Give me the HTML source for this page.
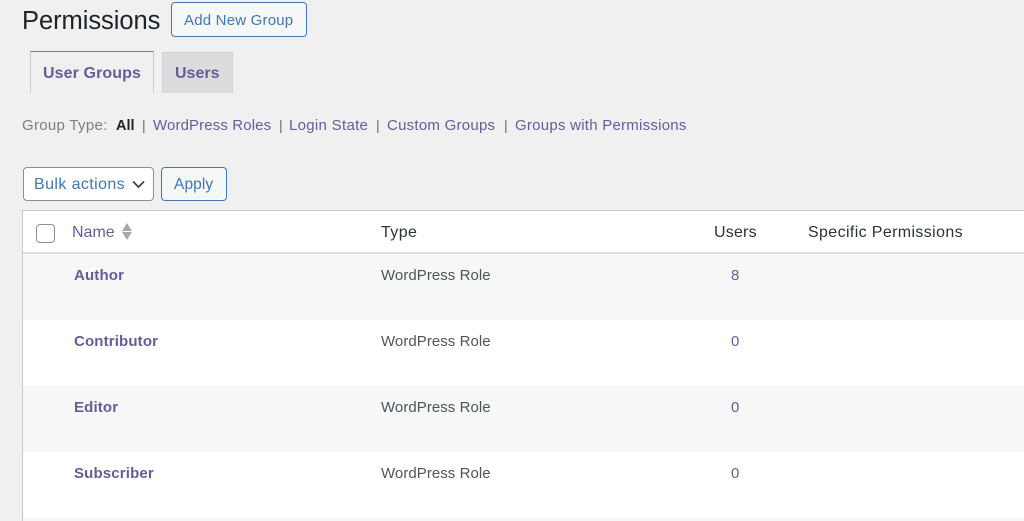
<!DOCTYPE html>
<html><head><meta charset="utf-8"><style>
html,body{margin:0;padding:0;width:1024px;height:521px;overflow:hidden}
#w{position:relative;width:1024px;height:521px;overflow:hidden;background:#f0f0f1;font-family:"Liberation Sans",sans-serif;font-size:15px;letter-spacing:.05px}
.a{position:absolute;white-space:nowrap;line-height:18px}
.p{color:#675c98}.b{font-weight:bold;letter-spacing:.15px}.g{color:#50555a}.h{color:#2c3338;font-size:16px}
.box{position:absolute;box-sizing:border-box}
.s{top:116px;color:#646970;font-size:14px;letter-spacing:0}
.l{top:117px;font-size:15px;letter-spacing:.25px}
</style></head><body><div id="w">
<div class="a" style="left:22px;top:5px;font-size:25.5px;line-height:32px;color:#1d2327;letter-spacing:-.05px">Permissions</div>
<div class="box" style="left:171px;top:2px;width:136px;height:35px;border:1px solid #3f78b5;border-radius:4px;background:#f6f7f7"></div>
<div class="a" style="left:184px;top:12px;color:#3f78b5;font-size:15px;letter-spacing:.2px">Add New Group</div>

<div class="box" style="left:30px;top:51px;width:124px;height:42px;background:#f0f0f1;border:1px solid #c9c9d8;border-top:1px solid #7d72aa;border-bottom:0"></div>
<div class="a p b" style="left:43px;top:65px;font-size:16px;letter-spacing:.1px">User Groups</div>
<div class="box" style="left:162px;top:52px;width:71px;height:41px;background:#dcdcde;border:1px solid #d2d2d6;border-bottom:0"></div>
<div class="a p b" style="left:175px;top:65px;font-size:16px;letter-spacing:0">Users</div>

<div class="a l" style="left:22px;color:#7c7f83;letter-spacing:.3px">Group Type:</div>
<div class="a b" style="left:116px;top:117px;color:#1d2327;font-size:14.500px;letter-spacing:0">All</div>
<div class="a s" style="left:142px">|</div>
<div class="a p l" style="left:153px;letter-spacing:.12px">WordPress Roles</div>
<div class="a s" style="left:279px">|</div>
<div class="a p l" style="left:289px;letter-spacing:.3px">Login State</div>
<div class="a s" style="left:376px">|</div>
<div class="a p l" style="left:387px">Custom Groups</div>
<div class="a s" style="left:504px">|</div>
<div class="a p l" style="left:515px">Groups with Permissions</div>

<div class="box" style="left:23px;top:167px;width:131px;height:34px;background:#fff;border:1px solid #8c8f94;border-radius:4px"></div>
<div class="a" style="left:34px;top:176px;color:#3f78b5;font-size:16px;letter-spacing:.4px">Bulk actions</div>
<svg class="box" style="left:131px;top:179px" width="16" height="10" viewBox="0 0 16 10"><path d="M2 2.500l5.500 5.500L13 2.500" fill="none" stroke="#3c434a" stroke-width="1.800"/></svg>
<div class="box" style="left:161px;top:167px;width:66px;height:34px;background:#f6f7f7;border:1px solid #3f78b5;border-radius:4px"></div>
<div class="a" style="left:174px;top:176px;color:#3f78b5;font-size:15.500px;letter-spacing:.1px">Apply</div>

<div class="box" style="left:22px;top:210px;width:1010px;height:320px;background:#fff;border:1px solid #c8c8d0"></div>
<div class="box" style="left:23px;top:252px;width:1001px;height:2px;background:#dcdcde"></div>
<div class="box" style="left:23px;top:254px;width:1001px;height:66px;background:#f6f7f7"></div>
<div class="box" style="left:23px;top:386px;width:1001px;height:66px;background:#f6f7f7"></div>
<div class="box" style="left:23px;top:518px;width:1001px;height:3px;background:#f6f7f7"></div>

<div class="box" style="left:36px;top:224px;width:19px;height:19px;background:#fff;border:1px solid #8c8f94;border-radius:4px"></div>
<div class="a p" style="left:72px;top:224px;font-size:16px;letter-spacing:0">Name</div>
<svg class="box" style="left:121px;top:222px" width="12" height="20" viewBox="0 0 12 20"><path d="M6 1l5 8H1zM6 18l-5-8h10z" fill="#a7aaad"/></svg>
<div class="a h" style="left:381px;top:224px;letter-spacing:.4px">Type</div>
<div class="a h" style="left:714px;top:224px;letter-spacing:.2px">Users</div>
<div class="a h" style="left:808px;top:224px;letter-spacing:.37px">Specific Permissions</div>

<div class="a p b" style="left:74px;top:267px">Author</div>
<div class="a g" style="left:381px;top:267px">WordPress Role</div>
<div class="a p" style="left:731px;top:267px">8</div>
<div class="a p b" style="left:74px;top:333px">Contributor</div>
<div class="a g" style="left:381px;top:333px">WordPress Role</div>
<div class="a p" style="left:731px;top:333px">0</div>
<div class="a p b" style="left:74px;top:399px">Editor</div>
<div class="a g" style="left:381px;top:399px">WordPress Role</div>
<div class="a p" style="left:731px;top:399px">0</div>
<div class="a p b" style="left:74px;top:465px">Subscriber</div>
<div class="a g" style="left:381px;top:465px">WordPress Role</div>
<div class="a p" style="left:731px;top:465px">0</div>
</div></body></html>
